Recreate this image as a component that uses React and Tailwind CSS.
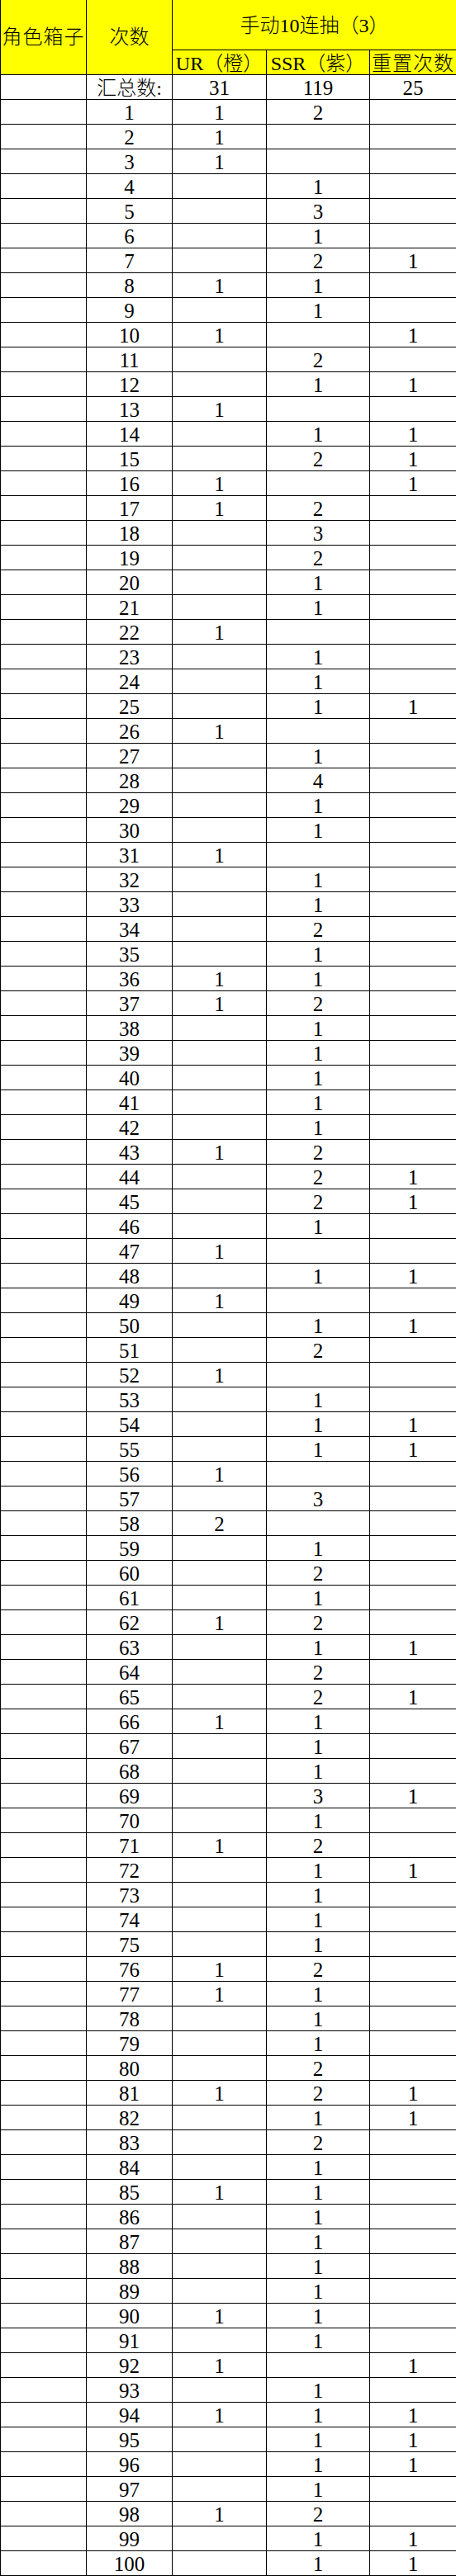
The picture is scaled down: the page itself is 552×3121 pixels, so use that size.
import React from 'react';

// [n, UR, SSR, reset]
const rows = [
  [1, 1, 2, ''], [2, 1, '', ''], [3, 1, '', ''], [4, '', 1, ''], [5, '', 3, ''],
  [6, '', 1, ''], [7, '', 2, 1], [8, 1, 1, ''], [9, '', 1, ''], [10, 1, '', 1],
  [11, '', 2, ''], [12, '', 1, 1], [13, 1, '', ''], [14, '', 1, 1], [15, '', 2, 1],
  [16, 1, '', 1], [17, 1, 2, ''], [18, '', 3, ''], [19, '', 2, ''], [20, '', 1, ''],
  [21, '', 1, ''], [22, 1, '', ''], [23, '', 1, ''], [24, '', 1, ''], [25, '', 1, 1],
  [26, 1, '', ''], [27, '', 1, ''], [28, '', 4, ''], [29, '', 1, ''], [30, '', 1, ''],
  [31, 1, '', ''], [32, '', 1, ''], [33, '', 1, ''], [34, '', 2, ''], [35, '', 1, ''],
  [36, 1, 1, ''], [37, 1, 2, ''], [38, '', 1, ''], [39, '', 1, ''], [40, '', 1, ''],
  [41, '', 1, ''], [42, '', 1, ''], [43, 1, 2, ''], [44, '', 2, 1], [45, '', 2, 1],
  [46, '', 1, ''], [47, 1, '', ''], [48, '', 1, 1], [49, 1, '', ''], [50, '', 1, 1],
  [51, '', 2, ''], [52, 1, '', ''], [53, '', 1, ''], [54, '', 1, 1], [55, '', 1, 1],
  [56, 1, '', ''], [57, '', 3, ''], [58, 2, '', ''], [59, '', 1, ''], [60, '', 2, ''],
  [61, '', 1, ''], [62, 1, 2, ''], [63, '', 1, 1], [64, '', 2, ''], [65, '', 2, 1],
  [66, 1, 1, ''], [67, '', 1, ''], [68, '', 1, ''], [69, '', 3, 1], [70, '', 1, ''],
  [71, 1, 2, ''], [72, '', 1, 1], [73, '', 1, ''], [74, '', 1, ''], [75, '', 1, ''],
  [76, 1, 2, ''], [77, 1, 1, ''], [78, '', 1, ''], [79, '', 1, ''], [80, '', 2, ''],
  [81, 1, 2, 1], [82, '', 1, 1], [83, '', 2, ''], [84, '', 1, ''], [85, 1, 1, ''],
  [86, '', 1, ''], [87, '', 1, ''], [88, '', 1, ''], [89, '', 1, ''], [90, 1, 1, ''],
  [91, '', 1, ''], [92, 1, '', 1], [93, '', 1, ''], [94, 1, 1, 1], [95, '', 1, 1],
  [96, '', 1, 1], [97, '', 1, ''], [98, 1, 2, ''], [99, '', 1, 1], [100, '', 1, 1],
];

const cell = 'border border-black h-[30px] p-0 pt-[3px] text-center align-middle leading-none';

export default function App() {
  return (
    <div className="w-[552px] bg-white text-black font-['Liberation_Serif','Noto_Sans_CJK_SC',serif] text-[25px]">
      <table className="w-[552px] table-fixed border-collapse">
        <colgroup>
          <col className="w-[104px]" />
          <col className="w-[104px]" />
          <col className="w-[114px]" />
          <col className="w-[125px]" />
          <col className="w-[105px]" />
        </colgroup>
        <thead className="font-light">
          <tr className="bg-[#ffff00]">
            <td rowSpan={2} className="border border-t-0 border-black p-0 text-center align-middle whitespace-nowrap text-[24px] tracking-[1px]">角色箱子</td>
            <td rowSpan={2} className="border border-t-0 border-black p-0 text-center align-middle text-[24px]">次数</td>
            <td colSpan={3} className="border border-t-0 border-black h-[60px] p-0 pt-[2px] text-center align-middle whitespace-nowrap text-[24px]">手动10连抽（3）</td>
          </tr>
          <tr className="bg-[#ffff00]">
            <td className={cell + ' whitespace-nowrap text-[24px]'}>UR（橙）</td>
            <td className={cell + ' whitespace-nowrap text-[24px]'}>SSR（紫）</td>
            <td className={cell + ' whitespace-nowrap text-[24px] tracking-[1px]'}>重置次数</td>
          </tr>
        </thead>
        <tbody>
          <tr>
            <td className={cell}></td>
            <td className={cell + ' whitespace-nowrap font-light text-[24px]'}>汇总数:</td>
            <td className={cell}>31</td>
            <td className={cell}>119</td>
            <td className={cell}>25</td>
          </tr>
          {rows.map(([n, ur, ssr, reset]) => (
            <tr key={n}>
              <td className={cell}></td>
              <td className={cell}>{n}</td>
              <td className={cell}>{ur}</td>
              <td className={cell}>{ssr}</td>
              <td className={cell}>{reset}</td>
            </tr>
          ))}
        </tbody>
      </table>
    </div>
  );
}
